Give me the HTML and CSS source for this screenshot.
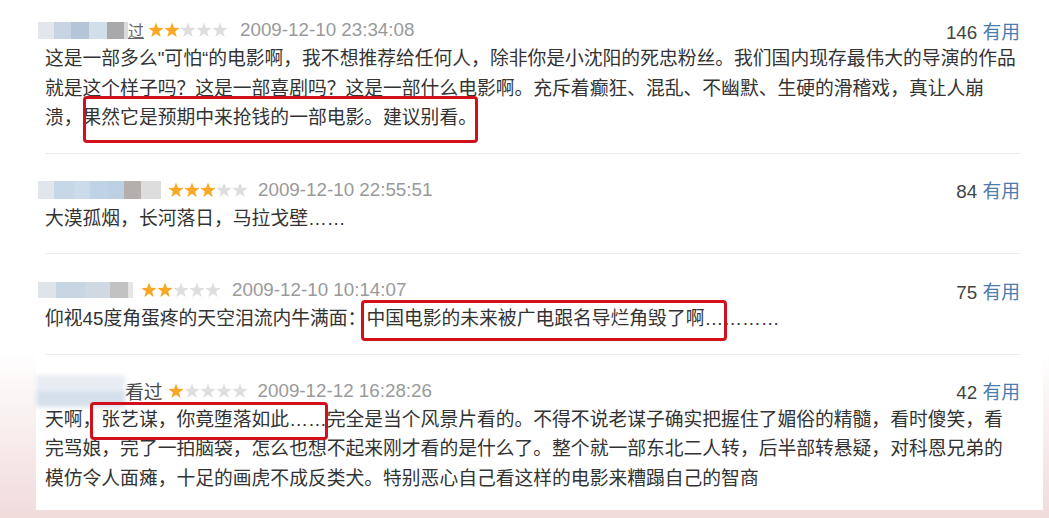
FILE: index.html
```html
<!DOCTYPE html>
<html lang="zh-CN">
<head>
  <meta charset="UTF-8" />
  <meta name="viewport" content="width=device-width, initial-scale=1.0" />
  <title>短评</title>
  <link rel="stylesheet" href="styles.css">
</head>
<body>
  <svg class="defs" width="0" height="0">
    <symbol id="star" viewBox="0 0 16 16">
      <polygon points="8,0.5 9.94,5.83 15.61,6.03 11.14,9.52 12.7,14.97 8,11.8 3.3,14.97 4.86,9.52 0.39,6.03 6.06,5.83"/>
    </symbol>
  </svg>

  <main class="comments">
    <div class="comment">
      <div class="comment-info">
        <a class="user"><span class="mosaic m1"></span><span class="tail">过</span></a>
        <span class="stars s1">
          <svg class="star on"><use href="#star"/></svg>
          <svg class="star on"><use href="#star"/></svg>
          <svg class="star"><use href="#star"/></svg>
          <svg class="star"><use href="#star"/></svg>
          <svg class="star"><use href="#star"/></svg>
        </span>
        <span class="time">2009-12-10 23:34:08</span>
        <span class="votes">146 <a>有用</a></span>
      </div>
      <p class="short">这是一部多么"可怕“的电影啊，我不想推荐给任何人，除非你是小沈阳的死忠粉丝。我们国内现存最伟大的导演的作品就是这个样子吗？这是一部喜剧吗？这是一部什么电影啊。充斥着癫狂、混乱、不幽默、生硬的滑稽戏，真让人崩溃，<span class="mark mark-1">果然它是预期中来抢钱的一部电影。建议别看。</span></p>
    </div>

    <div class="comment">
      <div class="comment-info">
        <a class="user"><span class="mosaic m2"></span></a>
        <span class="stars s2">
          <svg class="star on"><use href="#star"/></svg>
          <svg class="star on"><use href="#star"/></svg>
          <svg class="star on"><use href="#star"/></svg>
          <svg class="star"><use href="#star"/></svg>
          <svg class="star"><use href="#star"/></svg>
        </span>
        <span class="time">2009-12-10 22:55:51</span>
        <span class="votes">84 <a>有用</a></span>
      </div>
      <p class="short">大漠孤烟，长河落日，马拉戈壁……</p>
    </div>

    <div class="comment">
      <div class="comment-info">
        <a class="user"><span class="mosaic m3"></span></a>
        <span class="stars s3">
          <svg class="star on"><use href="#star"/></svg>
          <svg class="star on"><use href="#star"/></svg>
          <svg class="star"><use href="#star"/></svg>
          <svg class="star"><use href="#star"/></svg>
          <svg class="star"><use href="#star"/></svg>
        </span>
        <span class="time">2009-12-10 10:14:07</span>
        <span class="votes">75 <a>有用</a></span>
      </div>
      <p class="short">仰视45度角蛋疼的天空泪流内牛满面：<span class="mark mark-2">中国电影的未来被广电跟名导烂角毁了啊</span>…………</p>
    </div>

    <div class="comment">
      <div class="comment-info">
        <a class="user"><span class="mosaic m4"></span><span class="watched">看过</span></a>
        <span class="stars s4">
          <svg class="star on"><use href="#star"/></svg>
          <svg class="star"><use href="#star"/></svg>
          <svg class="star"><use href="#star"/></svg>
          <svg class="star"><use href="#star"/></svg>
          <svg class="star"><use href="#star"/></svg>
        </span>
        <span class="time">2009-12-12 16:28:26</span>
        <span class="votes">42 <a>有用</a></span>
      </div>
      <p class="short">天啊，<span class="mark mark-3">张艺谋，你竟堕落如此……</span>完全是当个风景片看的。不得不说老谋子确实把握住了媚俗的精髓，看时傻笑，看完骂娘，完了一拍脑袋，怎么也想不起来刚才看的是什么了。整个就一部东北二人转，后半部转悬疑，对科恩兄弟的模仿令人面瘫，十足的画虎不成反类犬。特别恶心自己看这样的电影来糟蹋自己的智商</p>
    </div>
  </main>
</body>
</html>
```

FILE: styles.css
```css
html {
  height: 100%;
  background: linear-gradient(180deg, #fff 0%, #fff 68%, #f1dbdb 100%);
}
body {
  margin: 0;
  padding-bottom: 6px;
  font-family: "Liberation Sans", "Noto Sans CJK SC", sans-serif;
  font-size: 18.8px;
  color: #333;
}
.defs {
  position: absolute;
}
.comments {
  margin: 0 6px 0 36px;
  padding: 0 23px 0 9px;
  background: #fff;
}
.comment {
  padding: 22px 0 20px;
  border-bottom: 1px solid #ebebeb;
}
.comment:first-child {
  padding-top: 16px;
}
.comment:last-child {
  padding-bottom: 17px;
  border-bottom: none;
}
.comment-info {
  display: flex;
  align-items: center;
  height: 28px;
}
.user {
  display: flex;
  align-items: center;
  color: #494949;
  text-decoration: none;
}
.mosaic {
  display: block;
  height: 17px;
  margin-left: -7px;
}
.m1 {
  width: 90px;
  background: linear-gradient(90deg, #e3e6ed 0 16px, #c8d4e3 16px 33px, #b5c5d8 33px 51px, #d3deeb 51px 69px, #a9a9ab 69px 86px, #dadada 86px 90px);
}
.m2 {
  width: 125px;
  height: 18px;
  background: linear-gradient(90deg, #e1e5ec 0 16px, #c6d7e8 16px 36px, #cbdbe9 36px 52px, #c0d3e6 52px 70px, #bcd0e4 70px 86px, #b4afac 86px 103px, #dddddd 103px 123px, #fff 123px);
}
.m3 {
  width: 95px;
  height: 16px;
  background: linear-gradient(90deg, #dfe4ea 0 18px, #c8d5e3 18px 47px, #d0d9e3 47px 72px, #c2c2c2 72px 90px, #e5e5e5 90px 95px);
}
.m4 {
  width: 89px;
  height: 32px;
  margin-left: -9px;
  background: linear-gradient(180deg, #e9edf3 0 50%, #d6e0ea 50%);
  filter: blur(2px);
}
.tail {
  font-size: 16px;
  color: #666;
  text-decoration: underline;
}
.stars {
  display: flex;
  margin: 0 12px 0 4px;
}
.s2, .s4 {
  margin-left: 5px;
  margin-right: 10px;
}
.s3 {
  margin-left: 8px;
  margin-right: 11px;
}
.star {
  width: 16px;
  height: 16px;
  fill: #dedede;
}
.star.on {
  fill: #f9a825;
}
.time {
  color: #9a9a9a;
}
.votes {
  margin-left: auto;
  color: #444;
}
.votes a {
  color: #4a7cae;
}
.short {
  margin: 0;
  line-height: 29.5px;
}
.mark {
  display: inline-block;
  position: relative;
}
.mark::after {
  content: "";
  position: absolute;
  border: 3px solid #d0101a;
  border-radius: 4px;
}
.mark-1::after {
  top: -7px;
  bottom: -10.5px;
  left: 0;
  right: -1px;
}
.mark-2::after {
  top: -4px;
  bottom: -7.5px;
  left: -5px;
  right: -23px;
}
.mark-3::after {
  top: -2.5px;
  bottom: -6px;
  left: -11px;
  right: -1px;
}
```
